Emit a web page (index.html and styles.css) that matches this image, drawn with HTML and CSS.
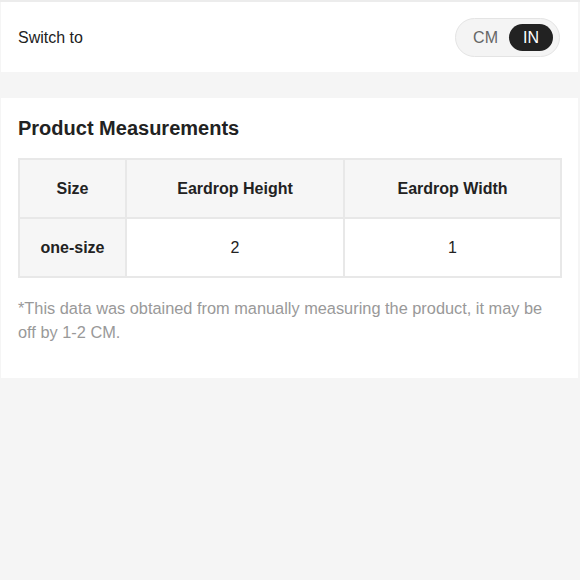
FILE: index.html
```html
<!DOCTYPE html>
<html>
<head>
<meta charset="utf-8">
<link rel="stylesheet" href="styles.css">
</head>
<body>
<div class="page">
  <div class="panel switch-row">
    <span class="switch-label">Switch to</span>
    <div class="toggle">
      <span class="opt">CM</span>
      <span class="opt active">IN</span>
    </div>
  </div>
  <div class="gap"></div>
  <div class="panel measure">
    <h2 class="title">Product Measurements</h2>
    <table class="table">
      <colgroup>
        <col class="c1"><col class="c2"><col class="c3">
      </colgroup>
      <thead>
        <tr><th>Size</th><th>Eardrop Height</th><th>Eardrop Width</th></tr>
      </thead>
      <tbody>
        <tr><th>one-size</th><td>2</td><td>1</td></tr>
      </tbody>
    </table>
    <p class="note">*This data was obtained from manually measuring the product, it may be off by 1-2 CM.</p>
  </div>
</div>
</body>
</html>
```
FILE: styles.css
```css
html, body {
  margin: 0;
  padding: 0;
  background: #f5f5f5;
  font-family: "Liberation Sans", Arial, sans-serif;
  color: #222;
}
.page {
  padding: 0 2px 0 1px;
  border-top: 2px solid #ececec;
  min-height: 578px;
}
.panel {
  background: #fff;
}
.switch-row {
  height: 70px;
  display: flex;
  align-items: center;
  justify-content: space-between;
  padding: 0 18px 0 17px;
}
.switch-label {
  font-size: 16px;
  margin-top: 1px;
}
.toggle {
  display: flex;
  align-items: center;
  padding: 0 6px 0 6px;
  border: 1px solid #e4e4e4;
  border-radius: 20px;
  background: #f4f4f4;
  box-sizing: border-box;
  height: 39px;
}
.opt {
  font-size: 16px;
  color: #666;
  height: 27px;
  line-height: 27px;
  padding: 0 11px;
  border-radius: 14px;
}
.opt.active {
  background: #222;
  color: #fff;
  padding: 0 14px;
}
.gap {
  height: 26px;
}
.measure {
  height: 280px;
  padding: 0 18px 0 17px;
  box-sizing: border-box;
  overflow: hidden;
}
.title {
  margin: 0;
  padding-top: 19px;
  font-size: 20px;
  font-weight: bold;
  line-height: 23px;
  color: #222;
}
.table {
  margin-top: 18px;
  width: 542px;
  border-collapse: collapse;
  table-layout: fixed;
}
.c1 { width: 107px; }
.c2 { width: 218px; }
.c3 { width: 217px; }
.table th, .table td {
  border: 2px solid #e8e8e8;
  height: 57px;
  padding: 0;
  text-align: center;
  font-size: 16px;
}
.table th {
  background: #f6f6f6;
  font-weight: bold;
  color: #222;
}
.table td {
  background: #fff;
  color: #222;
}
.note {
  margin: 18px 0 0;
  font-size: 16.35px;
  line-height: 24px;
  color: #999;
}
```
